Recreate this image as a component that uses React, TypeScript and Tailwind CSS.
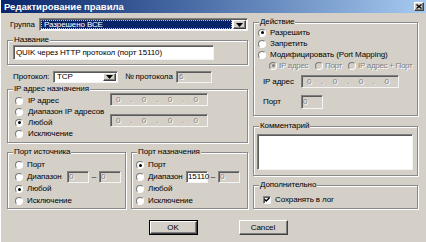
import React from 'react';

const sunken = 'border border-[#808080] border-r-[#f4f4f4] border-b-[#f4f4f4] shadow-[inset_1px_1px_0_#5a5a5a]';
const raised = 'border border-white border-r-[#404040] border-b-[#404040] shadow-[inset_-1px_-1px_0_#808080]';
const grayText = 'text-[#808080] [text-shadow:1px_1px_0_#fff]';

function Radio({ checked = false, disabled = false }: { checked?: boolean; disabled?: boolean }) {
  return (
    <span
      className={`flex h-[8px] w-[8px] shrink-0 items-center justify-center rounded-full border border-[#7a7a7a] border-b-white border-r-white ${
        disabled ? 'bg-[#d4d0c8]' : 'bg-white'
      }`}
    >
      {checked && <span className={`h-[3px] w-[3px] rounded-full ${disabled ? 'bg-[#808080]' : 'bg-black'}`} />}
    </span>
  );
}

function RadioRow({
  label,
  checked,
  disabled,
  className = 'h-[11px]',
  gap = 'gap-[4px]',
}: {
  label: string;
  checked?: boolean;
  disabled?: boolean;
  className?: string;
  gap?: string;
}) {
  return (
    <div className={`flex items-center whitespace-nowrap ${gap} ${className}`}>
      <Radio checked={checked} disabled={disabled} />
      <span className={disabled ? grayText : ''}>{label}</span>
    </div>
  );
}

function Group({ label, className = '', children }: { label: string; className?: string; children?: React.ReactNode }) {
  return (
    <div className={`border border-[#8a8a8a] shadow-[inset_1px_1px_0_#fff,1px_1px_0_#fff] ${className}`}>
      <div className="-mt-[6px] ml-[5px] h-[10px] w-fit bg-[#d4d0c8] px-[1px] leading-[10px]">{label}</div>
      {children}
    </div>
  );
}

function ArrowButton() {
  return (
    <div className={`flex h-full w-[13px] shrink-0 items-center justify-center bg-[#d4d0c8] ${raised}`}>
      <svg width="7" height="4" viewBox="0 0 7 4">
        <path d="M0 0h7L3.5 4z" fill="#000" />
      </svg>
    </div>
  );
}

function IpField({ className = '' }: { className?: string }) {
  return (
    <div className={`flex h-[13px] w-[98px] items-center justify-between bg-[#d4d0c8] pl-[5px] pr-[9px] ${sunken} ${grayText} ${className}`}>
      {['0', '.', '0', '.', '0', '.', '0'].map((c, i) => (
        <span key={i}>{c}</span>
      ))}
    </div>
  );
}

function SmallField({ value, enabled = false }: { value: string; enabled?: boolean }) {
  return (
    <div
      className={`flex h-[12px] w-[22px] items-center pl-[1px] ${sunken} ${
        enabled ? 'bg-white text-black' : `bg-[#d4d0c8] ${grayText}`
      }`}
    >
      {value}
    </div>
  );
}

function PortGroup({
  title,
  checked,
  from,
  fromEnabled,
  className,
  pad,
  labelWidth,
}: {
  title: string;
  checked: number;
  from: string;
  fromEnabled?: boolean;
  className: string;
  pad: string;
  labelWidth: string;
}) {
  return (
    <Group label={title} className={`h-[57px] ${className}`}>
      <div className={`mt-[2px] flex flex-col ${pad}`}>
        <RadioRow label="Порт" checked={checked === 0} className="h-[12px]" />
        <div className="flex h-[12px] items-center">
          <div className={`flex shrink-0 items-center gap-[4px] ${labelWidth}`}>
            <Radio />
            <span>Диапазон</span>
          </div>
          <SmallField value={from} enabled={fromEnabled} />
          <span className="w-[10px] text-center">–</span>
          <SmallField value="0" />
        </div>
        <RadioRow label="Любой" checked={checked === 2} className="h-[12px]" />
        <RadioRow label="Исключение" checked={checked === 3} className="h-[12px]" />
      </div>
    </Group>
  );
}

export default function App() {
  return (
    <div className="h-[242px] w-[426px] overflow-hidden border-l border-white bg-[#d4d0c8] font-['Liberation_Sans',Arial,sans-serif] text-[8px] leading-[10px] tracking-[-0.1px] text-black">
      <div className="flex h-[13px] items-center justify-between bg-gradient-to-r from-[#0a246a] to-[#a6caf0] pl-[3px] pr-[2px]">
        <span className="text-[9.5px] font-bold tracking-normal text-white">Редактирование правила</span>
        <div className={`flex h-[9px] w-[10px] items-center justify-center bg-[#d4d0c8] ${raised}`}>
          <svg width="6" height="5" viewBox="0 0 6 5">
            <path d="M0.5 0.5L5.5 4.5M5.5 0.5L0.5 4.5" stroke="#000" strokeWidth="1.3" />
          </svg>
        </div>
      </div>

      <div className="flex gap-[5px] pl-[6px]">
        <div className="flex w-[241px] flex-col">
          <div className="mt-[5px] flex h-[13px] items-center">
            <span className="ml-[3px] w-[29px]">Группа</span>
            <div className={`flex h-[13px] w-[209px] items-center gap-[1px] bg-white p-[1px] ${sunken}`}>
              <div className="flex h-full flex-1 items-center border border-dotted border-[#c0c8e0] bg-[#0a246a] pl-[2px] text-white">
                Разрешено ВСЕ
              </div>
              <ArrowButton />
            </div>
          </div>

          <Group label="Название" className="mt-[9px] h-[25px]">
            <div className={`ml-[5px] flex h-[15px] w-[201px] items-center bg-white pl-[2px] ${sunken}`}>
              QUIK через HTTP протокол (порт 15110)
            </div>
          </Group>

          <div className="mt-[6px] flex h-[12px] items-center">
            <span className="ml-[6px] w-[40px]">Протокол:</span>
            <div className={`flex h-[12px] w-[65px] items-center bg-white p-[1px] ${sunken}`}>
              <span className="flex-1 pl-[2px]">TCP</span>
              <ArrowButton />
            </div>
            <span className="ml-[7px] w-[51px]">№ протокола</span>
            <div className={`flex h-[12px] w-[36px] items-center bg-[#d4d0c8] pl-[2px] ${sunken} ${grayText}`}>6</div>
          </div>

          <Group label="IP адрес назначения" className="mt-[6px] h-[54px]">
            <div className="flex items-start">
              <div className="mt-[1px] flex flex-col pl-[7px]">
                <RadioRow label="IP адрес" gap="gap-[5px]" />
                <RadioRow label="Диапазон IP адресов" gap="gap-[5px]" />
                <RadioRow label="Любой" checked gap="gap-[5px]" />
                <RadioRow label="Исключение" gap="gap-[5px]" />
              </div>
              <div className="-mt-[1px] ml-auto mr-[39px] flex flex-col gap-[8px]">
                <IpField />
                <IpField />
              </div>
            </div>
          </Group>

          <div className="mt-[9px] flex gap-[5px]">
            <PortGroup
              title="Порт источника"
              checked={2}
              from="0"
              className="w-[119px]"
              pad="pl-[7px]"
              labelWidth="w-[52px]"
            />
            <PortGroup
              title="Порт назначения"
              checked={0}
              from="15110"
              fromEnabled
              className="w-[117px]"
              pad="pl-[4px]"
              labelWidth="w-[50px]"
            />
          </div>
        </div>

        <div className="flex w-[165px] flex-col">
          <Group label="Действие" className="mt-[9px] h-[94px]">
            <div className="flex flex-col pl-[4px]">
              <RadioRow label="Разрешить" checked />
              <RadioRow label="Запретить" />
              <RadioRow label="Модифицировать (Port Mapping)" />
              <div className="flex h-[11px] items-center pl-[11px] tracking-[-0.3px]">
                <div className="w-[46px] shrink-0">
                  <RadioRow label="IP адрес" checked disabled gap="gap-[2px]" />
                </div>
                <div className="w-[33px] shrink-0">
                  <RadioRow label="Порт" disabled gap="gap-[2px]" />
                </div>
                <RadioRow label="IP адрес + Порт" disabled gap="gap-[2px]" />
              </div>
            </div>
            <div className="mt-[4px] flex h-[13px] items-center pl-[9px]">
              <span className="w-[38px]">IP адрес</span>
              <IpField className="w-[97px]" />
            </div>
            <div className="mt-[7px] flex h-[14px] items-center pl-[9px]">
              <span className="w-[38px]">Порт</span>
              <div className={`h-[14px] w-[22px] bg-[#d4d0c8] pl-[1px] pt-[1px] ${sunken} ${grayText}`}>0</div>
            </div>
          </Group>

          <Group label="Комментарий" className="mt-[10px] h-[50px]">
            <div className={`ml-[3px] mt-[3px] h-[36px] w-[156px] bg-white ${sunken}`} />
          </Group>

          <Group label="Дополнительно" className="mt-[9px] h-[24px]">
            <div className="mt-[5px] flex h-[9px] items-center gap-[4px] pl-[9px]">
              <div className={`flex h-[8px] w-[8px] items-center justify-center bg-white ${sunken}`}>
                <svg width="6" height="5" viewBox="0 0 6 5">
                  <path d="M0.5 2.3L2.2 4L5.5 0.7" stroke="#000" strokeWidth="1.4" fill="none" />
                </svg>
              </div>
              <span>Сохранять в лог</span>
            </div>
          </Group>
        </div>
      </div>

      <div className="mt-[11px] flex justify-center gap-[41px] pl-[9px]">
        <div className="h-[15px] w-[49px] border border-black">
          <div className={`flex h-full w-full items-center justify-center bg-[#d4d0c8] ${raised}`}>OK</div>
        </div>
        <div className={`flex h-[15px] w-[49px] items-center justify-center bg-[#d4d0c8] ${raised}`}>Cancel</div>
      </div>
    </div>
  );
}
